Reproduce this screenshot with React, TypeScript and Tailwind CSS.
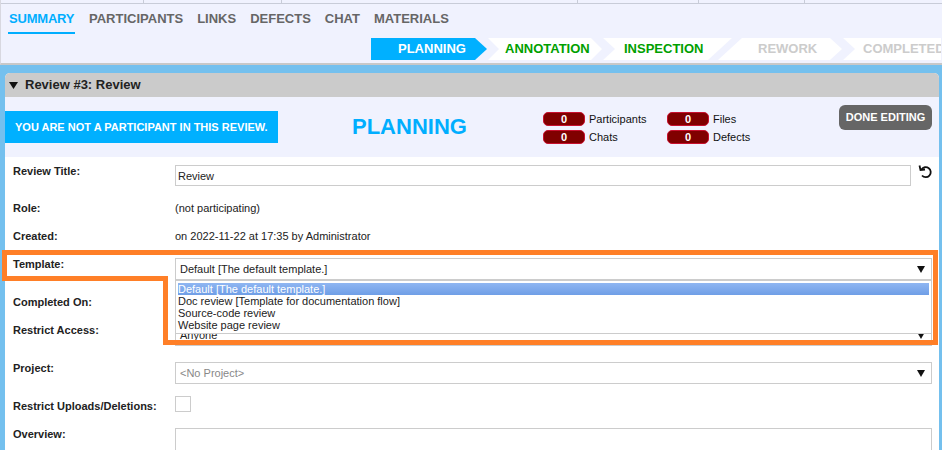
const sans = "font-['Liberation_Sans',Arial,sans-serif]";

function Counter({ label }: { label: string }) {
  return (
    <div className="flex items-center h-[18px]">
      <div className="w-[42px] h-[14px] rounded-[5px] bg-[#800000] border border-[#c8102e] text-white text-[11px] font-bold leading-[12px] text-center">0</div>
      <span className="ml-[4px] text-[11px] text-[#111]">{label}</span>
    </div>
  );
}

function Step({ label, color, points, fill, width, className, pad }: { label: string; color: string; points: string; fill: string; width: number; className: string; pad: string }) {
  return (
    <div className={`relative h-[22px] shrink-0 flex items-center text-[13px] font-bold ${pad} ${color} ${className}`}>
      <svg className="absolute inset-0" width={width} height="22" viewBox={`0 0 ${width} 22`}>
        <polygon points={points} fill={fill} />
      </svg>
      <span className="relative">{label}</span>
    </div>
  );
}

function Row({ label, h, children }: { label: string; h: string; children?: React.ReactNode }) {
  return (
    <div className={`flex ${h}`}>
      <div className="w-[170px] pl-[8px] text-[11px] leading-[12px] font-bold text-[#222]">{label}</div>
      <div className="flex-1 min-w-0 leading-[12px]">{children}</div>
    </div>
  );
}

function Select({ text, muted }: { text: string; muted?: boolean }) {
  return (
    <div className={`w-[757px] h-[22px] border border-[#ccc] bg-white flex items-center justify-between pl-[4px] pr-[5px] text-[11px] ${muted ? "text-[#888]" : "text-[#222]"}`}>
      <span>{text}</span>
      <svg width="10" height="8" viewBox="0 0 10 8"><polygon points="1,1 9,1 5,8" fill="#111" /></svg>
    </div>
  );
}

const tabClass = "pt-[7px] leading-[15px]";

export default function App() {
  return (
    <div className={`relative w-[942px] h-[450px] overflow-hidden bg-white ${sans}`}>
      {/* Top navigation */}
      <div className="h-[65px] bg-[#f0f2fe] border-b-2 border-[#c8c8c8] border-l border-l-[#d8d8e0]">
        <div className="h-[4px] border-b border-[#c8ccd8] flex">
          <div className="w-[143px] border-r border-[#c8ccd8]" />
          <div className="w-[138px] border-r border-[#c8ccd8]" />
          <div className="w-[296px] border-r border-[#c8ccd8]" />
          <div className="w-[121px] border-r border-[#c8ccd8]" />
          <div className="w-[106px] border-r border-[#c8ccd8]" />
        </div>
        <div className="flex pl-[7px] gap-[14px] h-[30px] text-[13px] font-bold text-[#666]">
          <div className={`w-[67px] text-[#00aeff] border-b-2 border-[#00aeff] px-[1px] tracking-[-0.2px] whitespace-nowrap ${tabClass}`}>SUMMARY</div>
          <div className={tabClass}>PARTICIPANTS</div>
          <div className={tabClass}>LINKS</div>
          <div className={tabClass}>DEFECTS</div>
          <div className={tabClass}>CHAT</div>
          <div className={tabClass}>MATERIALS</div>
        </div>
        <div className="flex mt-[4px] ml-[370px]">
          <Step label="PLANNING" color="text-white" width={116} fill="#00b0ff" points="0,0 104,0 116,11 104,22 0,22" pad="pl-[27px]" className="w-[116px]" />
          <Step label="ANNOTATION" color="text-[#00a000]" width={114} fill="#ffffff" points="0,0 103,0 114,11 103,22 0,22 11,11" pad="pl-[17px]" className="w-[114px] ml-[1px]" />
          <Step label="INSPECTION" color="text-[#00a000]" width={129} fill="#ffffff" points="0,0 129,0 105,22 0,22 12,11" pad="pl-[21px]" className="w-[129px] ml-[1px]" />
          <Step label="REWORK" color="text-[#cccccc]" width={124} fill="#ffffff" points="24,0 112,0 124,11 112,22 0,22" pad="pl-[40px]" className="w-[124px] -ml-[14px]" />
          <Step label="COMPLETED" color="text-[#cccccc]" width={98} fill="#ffffff" points="0,0 98,0 98,22 0,22 12,11" pad="pl-[20px]" className="w-[98px] ml-[1px] overflow-hidden" />
        </div>
      </div>

      {/* Blue frame */}
      <div className="bg-[#74c0ee] pl-[5px] pt-[8px] pr-[3px] h-[385px]">
        <div className="h-full bg-white rounded-t-[5px] overflow-hidden">
          <div className="h-[24px] bg-[#cbcbcb] flex items-center pl-[4px] gap-[7px] text-[13px] font-bold text-[#222]">
            <svg width="9" height="8" viewBox="0 0 9 8"><polygon points="0,1 9,1 4.5,8" fill="#111" /></svg>
            <span>Review #3: Review</span>
          </div>
          <div className="h-[60px] bg-[#f0f2fe] flex relative">
            <div className="mt-[14px] w-[273px] h-[32px] bg-[#00b0ff] flex items-center pl-[10px] text-[11px] font-bold text-white shrink-0">YOU ARE NOT A PARTICIPANT IN THIS REVIEW.</div>
            <div className="ml-[74px] mt-[14px] text-[22px] leading-[32px] font-bold text-[#00aeff] w-[118px] shrink-0">PLANNING</div>
            <div className="ml-[73px] mt-[13px] grid grid-cols-[124px_auto] h-[36px]">
              <Counter label="Participants" />
              <Counter label="Files" />
              <Counter label="Chats" />
              <Counter label="Defects" />
            </div>
            <div className="absolute left-[834px] top-[8px] w-[93px] h-[25px] rounded-[6px] bg-[#666] text-white text-[11px] font-bold flex items-center justify-center">DONE EDITING</div>
          </div>

          <div className="pt-[8px] text-[11px] text-[#222]">
            <Row label="Review Title:" h="h-[37px]">
              <div className="flex items-start">
                <div className="w-[736px] h-[21px] border border-[#ccc] flex items-center pl-[2px]">Review</div>
                <svg className="ml-[7px] -mt-[1px]" width="14" height="15" viewBox="0 0 14 15" fill="none" stroke="#111" strokeWidth="1.8">
                  <path d="M3.5 5.5 A5 5 0 1 1 4 11.5" />
                  <polyline points="1.5,1.5 2.5,6 7,5.5" />
                </svg>
              </div>
            </Row>
            <Row label="Role:" h="h-[28px]">(not participating)</Row>
            <Row label="Created:" h="h-[28px]">on 2022-11-22 at 17:35 by Administrator</Row>
            <Row label="Template:" h="h-[38px]"><Select text="Default [The default template.]" /></Row>
            <Row label="Completed On:" h="h-[28px]" />
            <Row label="Restrict Access:" h="h-[38px]"><Select text="Anyone" /></Row>
            <Row label="Project:" h="h-[38px]"><Select text="<No Project>" muted /></Row>
            <Row label="Restrict Uploads/Deletions:" h="h-[28px]"><div className="w-[16px] h-[16px] -mt-[4px] border border-[#ccc]" /></Row>
            <Row label="Overview:" h="h-[40px]"><div className="w-[757px] h-[40px] border border-[#ccc]" /></Row>
          </div>
        </div>
      </div>

      {/* Open dropdown list */}
      <div className="absolute left-[175px] top-[280px] w-[757px] h-[54px] bg-white border border-[#ccc] pt-[2px] pl-[2px] text-[11px] leading-[12px] text-[#222]">
        <div className="w-[751px] h-[12px] bg-[linear-gradient(#8fb6f2,#6f9ee6)] text-white">Default [The default template.]</div>
        <div>Doc review [Template for documentation flow]</div>
        <div>Source-code review</div>
        <div>Website page review</div>
      </div>

      {/* Orange annotation */}
      <svg className="absolute inset-0 pointer-events-none" width="942" height="450">
        <polygon points="4.5,252.5 935.5,252.5 935.5,342.5 165.5,342.5 165.5,278.5 4.5,278.5" fill="none" stroke="#ff7f27" strokeWidth="5" />
      </svg>
    </div>
  );
}
